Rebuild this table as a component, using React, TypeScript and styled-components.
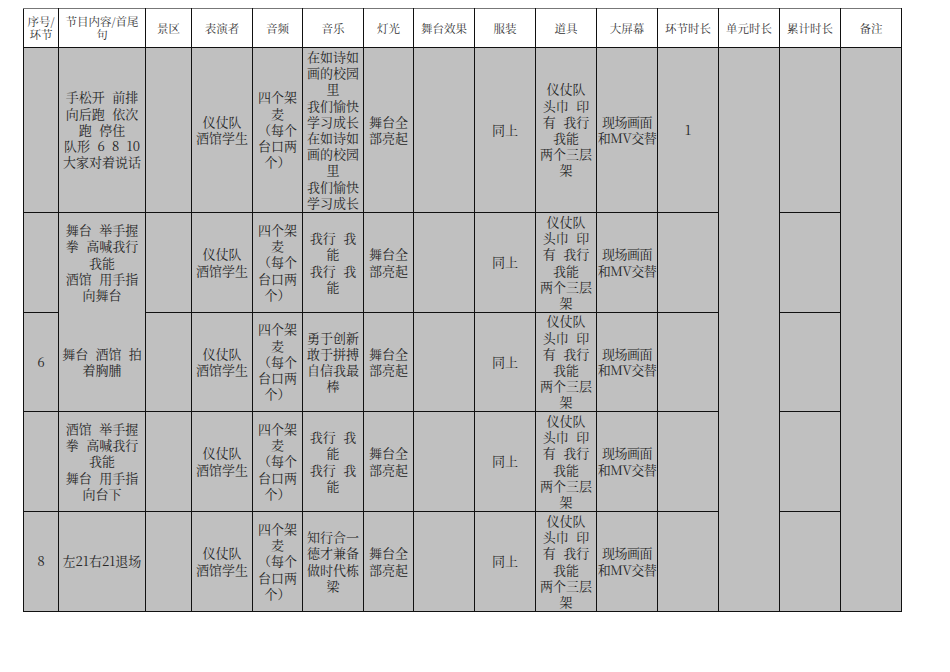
import React from "react";
import styled, { createGlobalStyle } from "styled-components";

const Global = createGlobalStyle`
  html, body { margin: 0; padding: 0; background: #ffffff; }
  body {
    font-family: "Noto Serif CJK SC", "Liberation Serif", "Noto Sans CJK SC", serif;
  }
`;

const Page = styled.div`
  padding: 8px 0 0 23px;
  width: 950px;
  height: 672px;
  box-sizing: border-box;
  background: #ffffff;
`;

const Sheet = styled.table`
  border-collapse: collapse;
  table-layout: fixed;
  width: 878px;
  border-left: 1px solid #555;
  border-right: 1px solid #555;
  border-top: 1px solid #777;
`;

const HeadRow = styled.tr`
  height: 39px;
`;

const BodyRow = styled.tr<{ $h: number }>`
  height: ${(p) => p.$h}px;
`;

const HeadCell = styled.th`
  background: #ffffff;
  border: 1px solid #111;
  border-top: 1px solid #777;
  font-family: "Noto Serif CJK SC", "Liberation Serif", "Noto Sans CJK SC", serif;
  font-weight: normal;
  font-size: 11.5px;
  line-height: 13px;
  color: #333;
  text-align: center;
  vertical-align: middle;
  padding: 0 1px;
  white-space: pre-line;
`;

const Cell = styled.td<{ $noBottom?: boolean; $noTop?: boolean; $nowrap?: boolean }>`
  background: #c0c0c0;
  border: 1px solid #111;
  ${(p) => (p.$noBottom ? "border-bottom: none;" : "")}
  ${(p) => (p.$noTop ? "border-top: none;" : "")}
  font-size: 13px;
  line-height: 16.2px;
  color: #262626;
  text-align: center;
  vertical-align: middle;
  padding: ${(p) => (p.$nowrap ? "0" : "0 1px")};
  white-space: ${(p) => (p.$nowrap ? "pre" : "pre-wrap")};
  letter-spacing: ${(p) => (p.$nowrap ? "-0.5px" : "0")};
  word-spacing: 4px;
  overflow: hidden;
`;

const widths = [35, 87, 46, 61, 50, 61, 50, 61, 61, 61, 61, 61, 61, 61, 61];
const headers = [
  "序号/\n环节",
  "节目内容/首尾\n句",
  "景区",
  "表演者",
  "音频",
  "音乐",
  "灯光",
  "舞台效果",
  "服装",
  "道具",
  "大屏幕",
  "环节时长",
  "单元时长",
  "累计时长",
  "备注",
];

const performer = "仪仗队\n酒馆学生";
const audio = "四个架\n麦\n（每个\n台口两\n个）";
const light = "舞台全\n部亮起";
const props = "仪仗队\n头巾 印\n有 我行\n我能\n两个三层\n架";
const screen = "现场画面\n和MV交替";

type RowData = {
  h: number;
  no: string;
  content: string;
  music: string;
  seg: string;
};

const rows: RowData[] = [
  {
    h: 165,
    no: "",
    content: "手松开 前排\n向后跑 依次\n跑 停住\n队形 6 8 10\n大家对着说话",
    music:
      "在如诗如\n画的校园\n里\n我们愉快\n学习成长\n在如诗如\n画的校园\n里\n我们愉快\n学习成长",
    seg: "1",
  },
  {
    h: 100,
    no: "",
    content: "舞台 举手握\n拳 高喊我行\n我能\n酒馆 用手指\n向舞台",
    music: "我行 我\n能\n我行 我\n能",
    seg: "",
  },
  {
    h: 99,
    no: "6",
    content: "舞台 酒馆 拍\n着胸脯",
    music: "勇于创新\n敢于拼搏\n自信我最\n棒",
    seg: "",
  },
  {
    h: 100,
    no: "",
    content: "酒馆 举手握\n拳 高喊我行\n我能\n舞台 用手指\n向台下",
    music: "我行 我\n能\n我行 我\n能",
    seg: "",
  },
  {
    h: 100,
    no: "8",
    content: "左21右21退场",
    music: "知行合一\n德才兼备\n做时代栋\n梁",
    seg: "",
  },
];

export default function App() {
  return (
    <Page>
      <Global />
      <Sheet>
        <colgroup>
          {widths.map((w, i) => (
            <col key={i} style={{ width: w }} />
          ))}
        </colgroup>
        <thead>
          <HeadRow>
            {headers.map((h) => (
              <HeadCell key={h}>{h}</HeadCell>
            ))}
          </HeadRow>
        </thead>
        <tbody>
          {rows.map((r, i) => (
            <BodyRow key={i} $h={r.h}>
              <Cell>{r.no}</Cell>
              <Cell $noBottom={i === 1} $noTop={i === 2}>
                {r.content}
              </Cell>
              <Cell />
              <Cell>{performer}</Cell>
              <Cell>{audio}</Cell>
              <Cell>{r.music}</Cell>
              <Cell>{light}</Cell>
              <Cell />
              <Cell>同上</Cell>
              <Cell>{props}</Cell>
              <Cell $nowrap>{screen}</Cell>
              <Cell>{r.seg}</Cell>
              {i === 0 && <Cell rowSpan={5} />}
              <Cell />
              {i === 0 && <Cell rowSpan={5} />}
            </BodyRow>
          ))}
        </tbody>
      </Sheet>
    </Page>
  );
}
